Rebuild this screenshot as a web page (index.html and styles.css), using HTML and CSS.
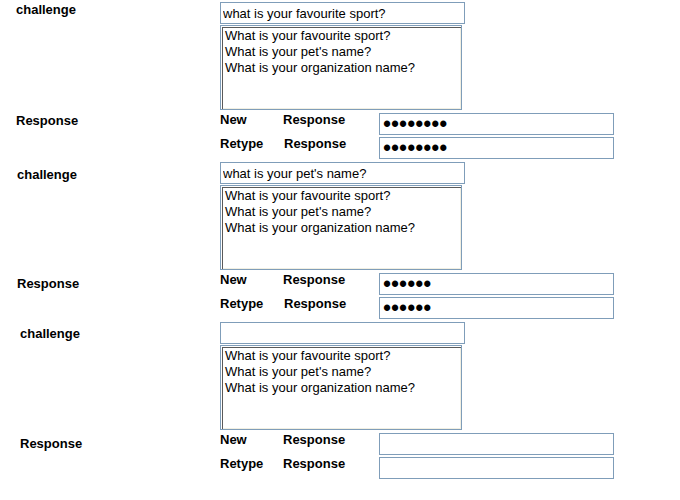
FILE: index.html
```html
<!DOCTYPE html>
<html>
<head>
<meta charset="utf-8">
<title>Challenge questions</title>
<link rel="stylesheet" href="styles.css">
</head>
<body>
<form class="page">
  <div class="section">
    <div class="label off-c1">challenge</div>
    <div class="field">
      <input class="challenge-input" type="text" value="what is your favourite sport?">
      <textarea class="options">What is your favourite sport?
What is your pet's name?
What is your organization name?</textarea>
    </div>
    <div class="label off-r1">Response</div>
    <div class="responses">
      <span class="sub">New</span><span class="sub">Response</span><input class="pw" type="password" value="abcdefgh">
      <span class="sub">Retype</span><span class="sub shift">Response</span><input class="pw" type="password" value="abcdefgh">
    </div>
  </div>

  <div class="section">
    <div class="label off-c2">challenge</div>
    <div class="field">
      <input class="challenge-input" type="text" value="what is your pet's name?">
      <textarea class="options">What is your favourite sport?
What is your pet's name?
What is your organization name?</textarea>
    </div>
    <div class="label off-r2">Response</div>
    <div class="responses">
      <span class="sub">New</span><span class="sub">Response</span><input class="pw" type="password" value="abcdef">
      <span class="sub">Retype</span><span class="sub shift">Response</span><input class="pw" type="password" value="abcdef">
    </div>
  </div>

  <div class="section indent">
    <div class="label off-c3">challenge</div>
    <div class="field">
      <input class="challenge-input" type="text" value="">
      <textarea class="options">What is your favourite sport?
What is your pet's name?
What is your organization name?</textarea>
    </div>
    <div class="label off-r3">Response</div>
    <div class="responses">
      <span class="sub">New</span><span class="sub">Response</span><input class="pw" type="password" value="">
      <span class="sub">Retype</span><span class="sub">Response</span><input class="pw" type="password" value="">
    </div>
  </div>
</form>
</body>
</html>
```

FILE: styles.css
```css
html, body {
  margin: 0;
  padding: 0;
  background: #ffffff;
}

body {
  font-family: "Liberation Sans", Arial, sans-serif;
  font-size: 13px;
  line-height: 16px;
  color: #000000;
}

.section {
  display: grid;
  grid-template-columns: 220px 1fr;
  padding-top: 2px;
  padding-bottom: 1px;
}

.label {
  font-weight: bold;
  padding-left: 17px;
}

.indent .label {
  padding-left: 20px;
}

.off-c1 { padding-top: 0; padding-left: 16px; }
.off-c2 { padding-top: 5px; }
.off-c3 { padding-top: 4px; }
.off-r1 { padding-top: 3px; padding-left: 16px; }
.off-r2 { padding-top: 6px; }
.off-r3 { padding-top: 6px; }

.field {
  display: flex;
  flex-direction: column;
  align-items: flex-start;
}

.challenge-input {
  box-sizing: border-box;
  width: 245px;
  height: 22px;
  margin: 0;
  padding: 0 2px;
  border: 1px solid #7f9db9;
  background: #ffffff;
  font-family: "Liberation Sans", Arial, sans-serif;
  font-size: 13px;
  color: #000000;
  outline: none;
}

.options {
  box-sizing: border-box;
  width: 242px;
  height: 85px;
  margin: 1px 0 0 0;
  padding: 2px 3px 0 4px;
  border: 1px solid #7f9db9;
  box-shadow: inset 1px 1px 0 #ffffff, inset 2px 2px 0 #5a5a5a, inset -1px -1px 0 #f1efe2;
  background: #ffffff;
  font-family: "Liberation Sans", Arial, sans-serif;
  font-size: 13px;
  line-height: 16px;
  color: #000000;
  resize: none;
  overflow: hidden;
  outline: none;
}

.responses {
  display: grid;
  grid-template-columns: 63px 96px 235px;
  row-gap: 2px;
  margin-top: 3px;
  align-items: start;
}

.sub {
  font-weight: bold;
  margin-top: -1px;
}

.sub.shift {
  padding-left: 1px;
}

.pw {
  box-sizing: border-box;
  width: 235px;
  height: 22px;
  margin: 0;
  padding: 0 3px;
  border: 1px solid #7f9db9;
  background: #ffffff;
  font-family: "Liberation Sans", Arial, sans-serif;
  font-size: 23px;
  color: #000000;
  outline: none;
}
```
